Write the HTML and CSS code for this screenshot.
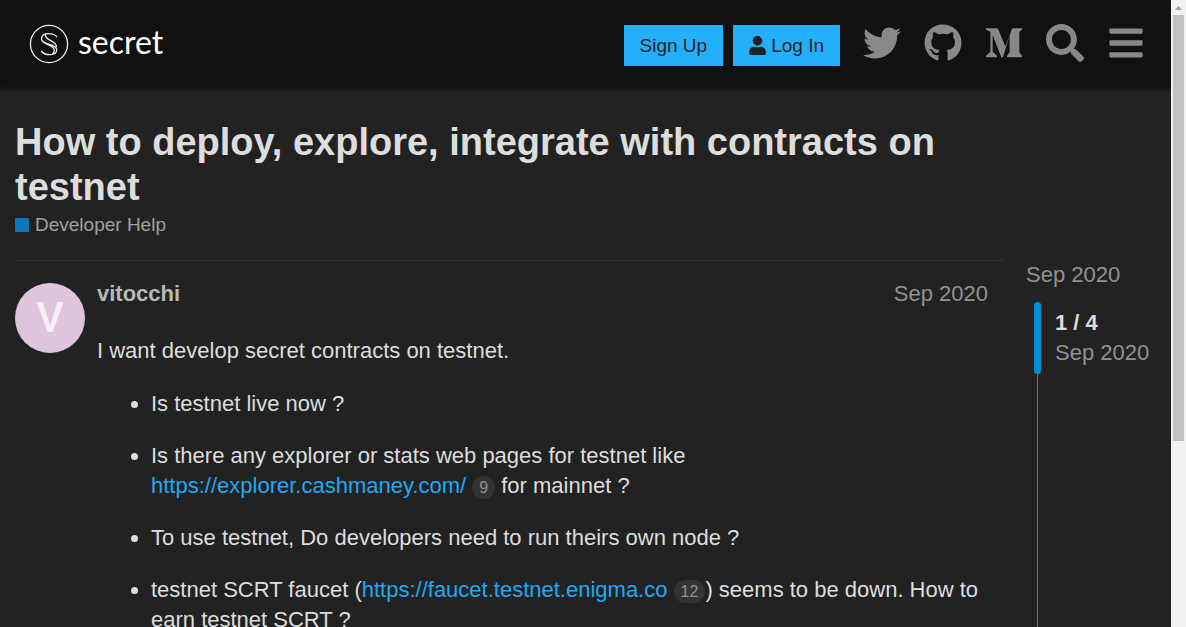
FILE: index.html
```html
<!DOCTYPE html>
<html lang="en">
<head>
<meta charset="utf-8">
<title>How to deploy, explore, integrate with contracts on testnet</title>
<link rel="stylesheet" href="styles.css">
</head>
<body>
<div class="viewport">
  <div class="page">
    <header class="header">
      <a class="logo" href="#">
        <svg class="logo-mark" viewBox="0 0 40 40" aria-hidden="true">
          <circle cx="20" cy="20" r="18.600"/>
          <path d="M28 13.200C26 10.600 23.200 9.700 20 9.700c-4.400 0-7.500 2-7.500 5.200 0 6 15.200 4.400 15.200 11 0 3.200-3.200 4.800-7 4.800-3.600 0-6.700-1.200-8.500-3.700M16.600 10.600c-1.600 5.800 11 5.600 11 12.600M12.500 15c0 5.800 12.800 5.600 12.800 11.400 0 1.600-.8 2.800-2 3.800"/>
        </svg>
        <span class="logo-text">secret</span>
      </a>
      <div class="actions">
        <button class="btn" type="button">Sign Up</button>
        <button class="btn" type="button">
          <svg class="user" viewBox="0 0 448 512" aria-hidden="true"><path d="M224 256c70.700 0 128-57.300 128-128S294.700 0 224 0 96 57.300 96 128s57.300 128 128 128zm89.600 32h-16.700c-22.200 10.200-46.900 16-72.900 16s-50.600-5.800-72.900-16h-16.700C60.200 288 0 348.200 0 422.400V464c0 26.500 21.500 48 48 48h352c26.500 0 48-21.500 48-48v-41.600c0-74.200-60.200-134.400-134.400-134.400z"/></svg>
          Log In
        </button>
      </div>
      <nav class="icons" aria-label="Site">
        <a href="#" aria-label="Twitter"><svg viewBox="0 0 512 512"><path d="M459.370 151.716c.325 4.548.325 9.097.325 13.645 0 138.720-105.583 298.558-298.558 298.558-59.452 0-114.680-17.219-161.137-47.106 8.447.974 16.568 1.299 25.340 1.299 49.055 0 94.213-16.568 130.274-44.832-46.132-.975-84.792-31.188-98.112-72.772 6.498.974 12.995 1.624 19.818 1.624 9.421 0 18.843-1.300 27.614-3.573-48.081-9.747-84.143-51.980-84.143-102.985v-1.299c13.969 7.797 30.214 12.670 47.431 13.319-28.264-18.843-46.781-51.005-46.781-87.391 0-19.492 5.197-37.360 14.294-52.954 51.655 63.675 129.300 105.258 216.365 109.807-1.624-7.797-2.599-15.918-2.599-24.040 0-57.828 46.782-104.934 104.934-104.934 30.213 0 57.502 12.670 76.670 33.137 23.715-4.548 46.456-13.320 66.599-25.340-7.798 24.366-24.366 44.833-46.132 57.827 21.117-2.273 41.584-8.122 60.426-16.243-14.292 20.791-32.161 39.308-52.628 54.253z"/></svg></a>
        <a href="#" aria-label="GitHub"><svg viewBox="0 0 496 512"><path d="M244.800 8C106.100 8 0 113.300 0 252c0 110.900 69.800 205.800 169.500 239.200 12.800 2.300 17.300-5.600 17.300-12.100 0-6.200-.3-40.400-.3-61.400 0 0-70 15-84.700-29.800 0 0-11.400-29.100-27.800-36.600 0 0-22.900-15.700 1.600-15.400 0 0 24.900 2 38.600 25.800 21.900 38.600 58.600 27.500 72.900 20.900 2.300-16 8.800-27.100 16-33.700-55.900-6.200-112.300-14.300-112.300-110.500 0-27.500 7.600-41.300 23.600-58.900-2.600-6.500-11.100-33.300 2.600-67.900 20.900-6.500 69 27 69 27 20-5.600 41.500-8.500 62.800-8.500s42.800 2.900 62.800 8.500c0 0 48.100-33.600 69-27 13.700 34.700 5.200 61.400 2.600 67.900 16 17.700 25.800 31.500 25.800 58.900 0 96.500-58.900 104.200-114.800 110.500 9.200 7.900 17 22.900 17 46.400 0 33.700-.3 75.400-.3 83.600 0 6.500 4.600 14.400 17.300 12.100C428.200 457.800 496 362.900 496 252 496 113.300 383.500 8 244.800 8z"/></svg></a>
        <a href="#" aria-label="Medium"><svg viewBox="-3 -13 114 114"><path d="M0 0h35l23 54L79 0h29v4l-8 6v62l8 10v5H63v-5l8-12V20L51 87h-5L20 20v50l13 12v5H0v-5l13-12V10L0 4z"/></svg></a>
        <button type="button" aria-label="Search"><svg viewBox="0 0 512 512"><path d="M505 442.700L405.300 343c-4.500-4.500-10.600-7-17-7H372c27.600-35.300 44-79.700 44-128C416 93.100 322.900 0 208 0S0 93.100 0 208s93.100 208 208 208c48.300 0 92.700-16.400 128-44v16.300c0 6.400 2.500 12.500 7 17l99.700 99.700c9.400 9.400 24.600 9.400 33.900 0l28.300-28.300c9.400-9.400 9.400-24.600.1-34zM208 336c-70.700 0-128-57.200-128-128 0-70.700 57.200-128 128-128 70.700 0 128 57.200 128 128 0 70.700-57.200 128-128 128z"/></svg></button>
        <button type="button" aria-label="Menu"><svg viewBox="-32 0 512 512"><path d="M16 132h416c8.837 0 16-7.163 16-16V76c0-8.837-7.163-16-16-16H16C7.163 60 0 67.163 0 76v40c0 8.837 7.163 16 16 16zm0 160h416c8.837 0 16-7.163 16-16v-40c0-8.837-7.163-16-16-16H16c-8.837 0-16 7.163-16 16v40c0 8.837 7.163 16 16 16zm0 160h416c8.837 0 16-7.163 16-16v-40c0-8.837-7.163-16-16-16H16c-8.837 0-16 7.163-16 16v40c0 8.837 7.163 16 16 16z"/></svg></button>
      </nav>
    </header>

    <main class="main">
      <div class="topic-title">
        <h1>How to deploy, explore, integrate with contracts on testnet</h1>
        <a class="category" href="#"><span class="swatch"></span>Developer Help</a>
      </div>
      <div class="topic">
        <article class="post">
          <div class="avatar" aria-hidden="true">V</div>
          <div class="body">
            <div class="meta"><a class="author" href="#">vitocchi</a><a class="date" href="#">Sep 2020</a></div>
            <p>I want develop secret contracts on testnet.</p>
            <ul>
              <li>Is testnet live now ?</li>
              <li>Is there any explorer or stats web pages for testnet like <a href="#">https://explorer.cashmaney.com/</a> <span class="clicks">9</span> for mainnet ?</li>
              <li>To use testnet, Do developers need to run theirs own node ?</li>
              <li>testnet SCRT faucet (<a href="#">https://faucet.testnet.enigma.co</a> <span class="clicks">12</span>) seems to be down. How to earn testnet SCRT ?</li>
            </ul>
          </div>
        </article>
        <aside class="timeline">
          <a class="start" href="#">Sep 2020</a>
          <div class="track">
            <div class="handle"></div>
            <div class="position"><strong>1 / 4</strong><span>Sep 2020</span></div>
          </div>
        </aside>
      </div>
    </main>
  </div>
  <div class="scrollbar" aria-hidden="true"><div class="arrow"></div><div class="thumb"></div></div>
</div>
</body>
</html>
```
FILE: styles.css
```css
* { box-sizing: border-box; }
body {
  margin: 0;
  background: #222;
  color: #ddd;
  font: 22px/30px "Liberation Sans", Arial, sans-serif;
}
a { color: inherit; text-decoration: none; }
button { border: 0; margin: 0; font: inherit; cursor: pointer; }
svg { display: block; }

.viewport { display: flex; height: 100vh; overflow: hidden; }
.page { flex: 1; min-width: 0; display: flex; flex-direction: column; }

.header {
  flex: none;
  display: flex;
  align-items: flex-start;
  padding: 22px 15px 21px 29px;
  background: #111;
  box-shadow: 0 2px 4px rgba(0, 0, 0, .5);
}
.logo { display: flex; align-items: center; gap: 9px; margin: 2px auto 0 0; }
.logo-mark { width: 40px; height: 40px; fill: none; stroke: #eee; stroke-width: 1.3; }
.logo-text { color: #fff; font: 32px/36px Lato, sans-serif; padding-bottom: 4px; }
.actions { display: flex; gap: 10px; margin: 3px 11px 0 0; }
.btn {
  display: flex;
  align-items: center;
  gap: 5px;
  height: 41px;
  padding: 0 16px;
  background: #22b0fb;
  color: #222;
  font-size: 19px;
}
.user { width: 17px; height: 19px; fill: #222; }
.icons { display: flex; }
.icons a, .icons button {
  display: flex;
  justify-content: center;
  width: 61px;
  padding: 2px 0;
  background: none;
}
.icons svg { width: 38px; height: 38px; fill: #888; }

.main { flex: 1; min-height: 0; padding: 33px 15px 0; }
h1 { margin: 0; max-width: 980px; font-size: 38px; line-height: 45px; }
.category { display: inline-flex; align-items: center; gap: 6px; color: #a0a0a0; font-size: 19px; line-height: 24px; }
.swatch { width: 14px; height: 14px; background: #0e76bd; }

.topic { display: grid; grid-template-columns: minmax(0, 1fr) 130px; gap: 22px; margin-top: 20px; }
.post {
  display: flex;
  gap: 12px;
  border-top: 1px solid #333;
  padding: 18px 16px 0 0;
}
.avatar {
  flex: none;
  width: 70px;
  height: 70px;
  margin-top: 4px;
  border-radius: 50%;
  background: #dec5dc;
  color: #f8f0f8;
  font: 500 42px/70px Roboto, sans-serif;
  text-align: center;
}
.body { flex: 1; min-width: 0; }
.meta { display: flex; justify-content: space-between; }
.author { color: #b8b8b8; font-weight: bold; }
.date, .timeline { color: #919191; }
.body p { margin: 27px 0 23px; }
.body ul { margin: 0; padding-left: 54px; }
.body li { margin-bottom: 22px; }
.body li a { color: #1fa9f5; }
.clicks {
  display: inline-block;
  padding: 0 7px;
  border-radius: 12px;
  background: #333;
  color: #919191;
  font-size: 16px;
  line-height: 23px;
}

.start { display: block; }
.track { display: flex; gap: 14px; height: 100vh; margin: 12px 0 0 8px; background: linear-gradient(#1a8bc6, #1a8bc6) 3px 0 / 1px 100% no-repeat; }
.handle { width: 7px; height: 72px; border-radius: 4px; background: #088ccf; }
.position { display: flex; flex-direction: column; padding-top: 6px; white-space: nowrap; }
.position strong { color: #ddd; }

.scrollbar { flex: none; width: 15px; padding: 0 2px; background: #f1f1f1; }
.arrow { height: 15px; background: #a3a3a3; clip-path: polygon(50% 6px, 9px 10px, 2px 10px); }
.thumb { height: 68%; background: #c1c1c1; }
```
